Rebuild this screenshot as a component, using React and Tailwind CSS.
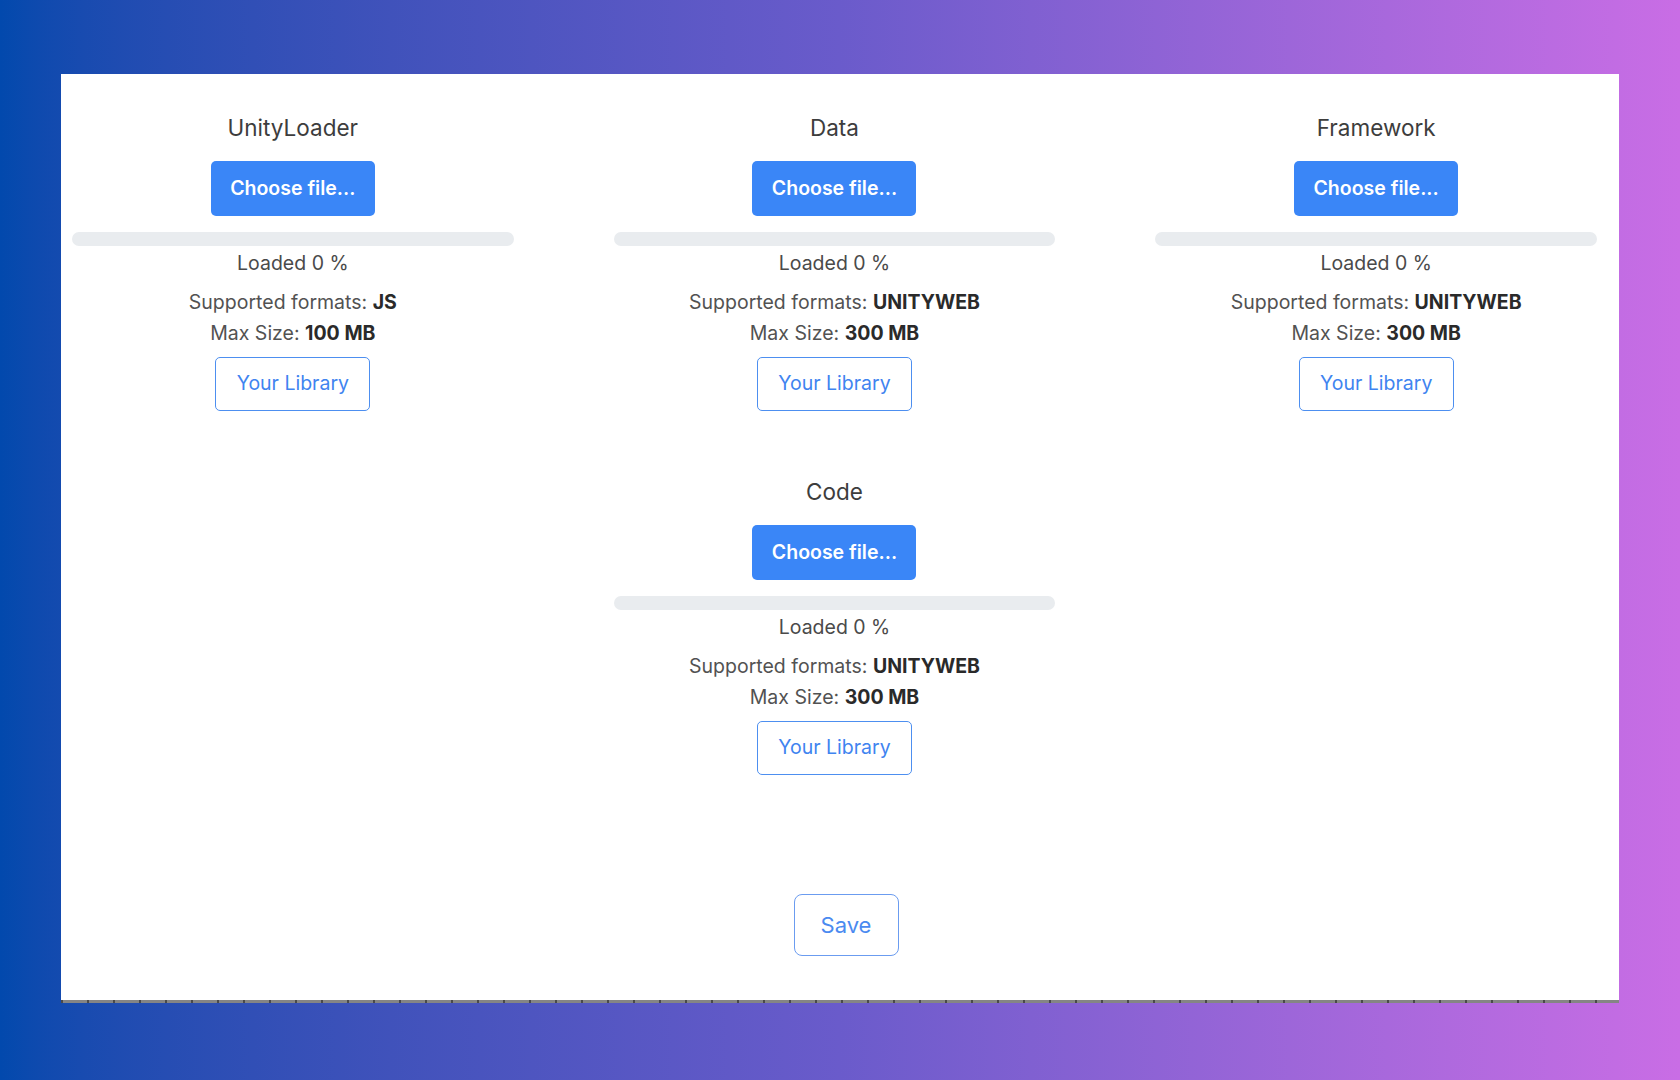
import React from 'react';

const UPLOADS = [
  { title: 'UnityLoader', formats: 'JS', maxSize: '100 MB' },
  { title: 'Data', formats: 'UNITYWEB', maxSize: '300 MB' },
  { title: 'Framework', formats: 'UNITYWEB', maxSize: '300 MB' },
  { title: 'Code', formats: 'UNITYWEB', maxSize: '300 MB', col: 'col-start-2' },
];

function UploadSlot({ title, formats, maxSize, col = '' }) {
  return (
    <div className={`flex flex-col items-center ${col}`}>
      <h3 className="text-[22.5px] leading-[30px] text-[#3d3d3d]">{title}</h3>
      <button className="mt-[18px] h-[55px] w-[164px] rounded-[5px] bg-[#3a86f7] text-[19.5px] font-semibold text-white">
        Choose file...
      </button>
      <div className="mt-[16px] h-[14px] w-full rounded-full bg-[#e9ecef]">
        <div className="h-full w-0 rounded-full bg-[#3a86f7]" />
      </div>
      <p className="mt-[2px] text-[19.5px] leading-[30px] text-[#4a4a4a]">Loaded 0 %</p>
      <p className="mt-[9px] text-[19.5px] leading-[30px] text-[#525252]">
        Supported formats: <span className="font-bold text-[#2a2a2a]">{formats}</span>
      </p>
      <p className="mt-px text-[19.5px] leading-[30px] text-[#525252]">
        Max Size: <span className="font-bold text-[#2a2a2a]">{maxSize}</span>
      </p>
      <button className="mt-[9px] h-[54px] w-[155px] rounded-[5px] border-[1.5px] border-[#4d8ff0] bg-white text-[19.5px] text-[#3f84f0]">
        Your Library
      </button>
    </div>
  );
}

export default function App() {
  return (
    <div
      className="h-[1080px] w-full overflow-hidden bg-gradient-to-r from-[#0249ad] via-[#6a5bcb] to-[#c96de5] px-[61px] pt-[74px]"
      style={{ fontFamily: 'Inter, "Noto Sans", sans-serif' }}
    >
      <div className="flex h-[929px] flex-col bg-white">
        <div className="grid grid-cols-3 gap-x-[100px] gap-y-[66px] pl-[11px] pr-[22px] pt-[39px]">
          {UPLOADS.map(u => <UploadSlot key={u.title} {...u} />)}
        </div>

        {/* Save */}
        <div className="mt-[119px] flex justify-center pl-[12px]">
          <button className="h-[62px] w-[105px] rounded-[8px] border-[1.5px] border-[#6b9cf0] bg-white text-[22px] text-[#4a8af0]">
            Save
          </button>
        </div>

        <div className="mt-auto h-[3px] w-full bg-[repeating-linear-gradient(90deg,#4a4a4a_0_2px,#858585_2px_26px)]" />
      </div>
    </div>
  );
}
